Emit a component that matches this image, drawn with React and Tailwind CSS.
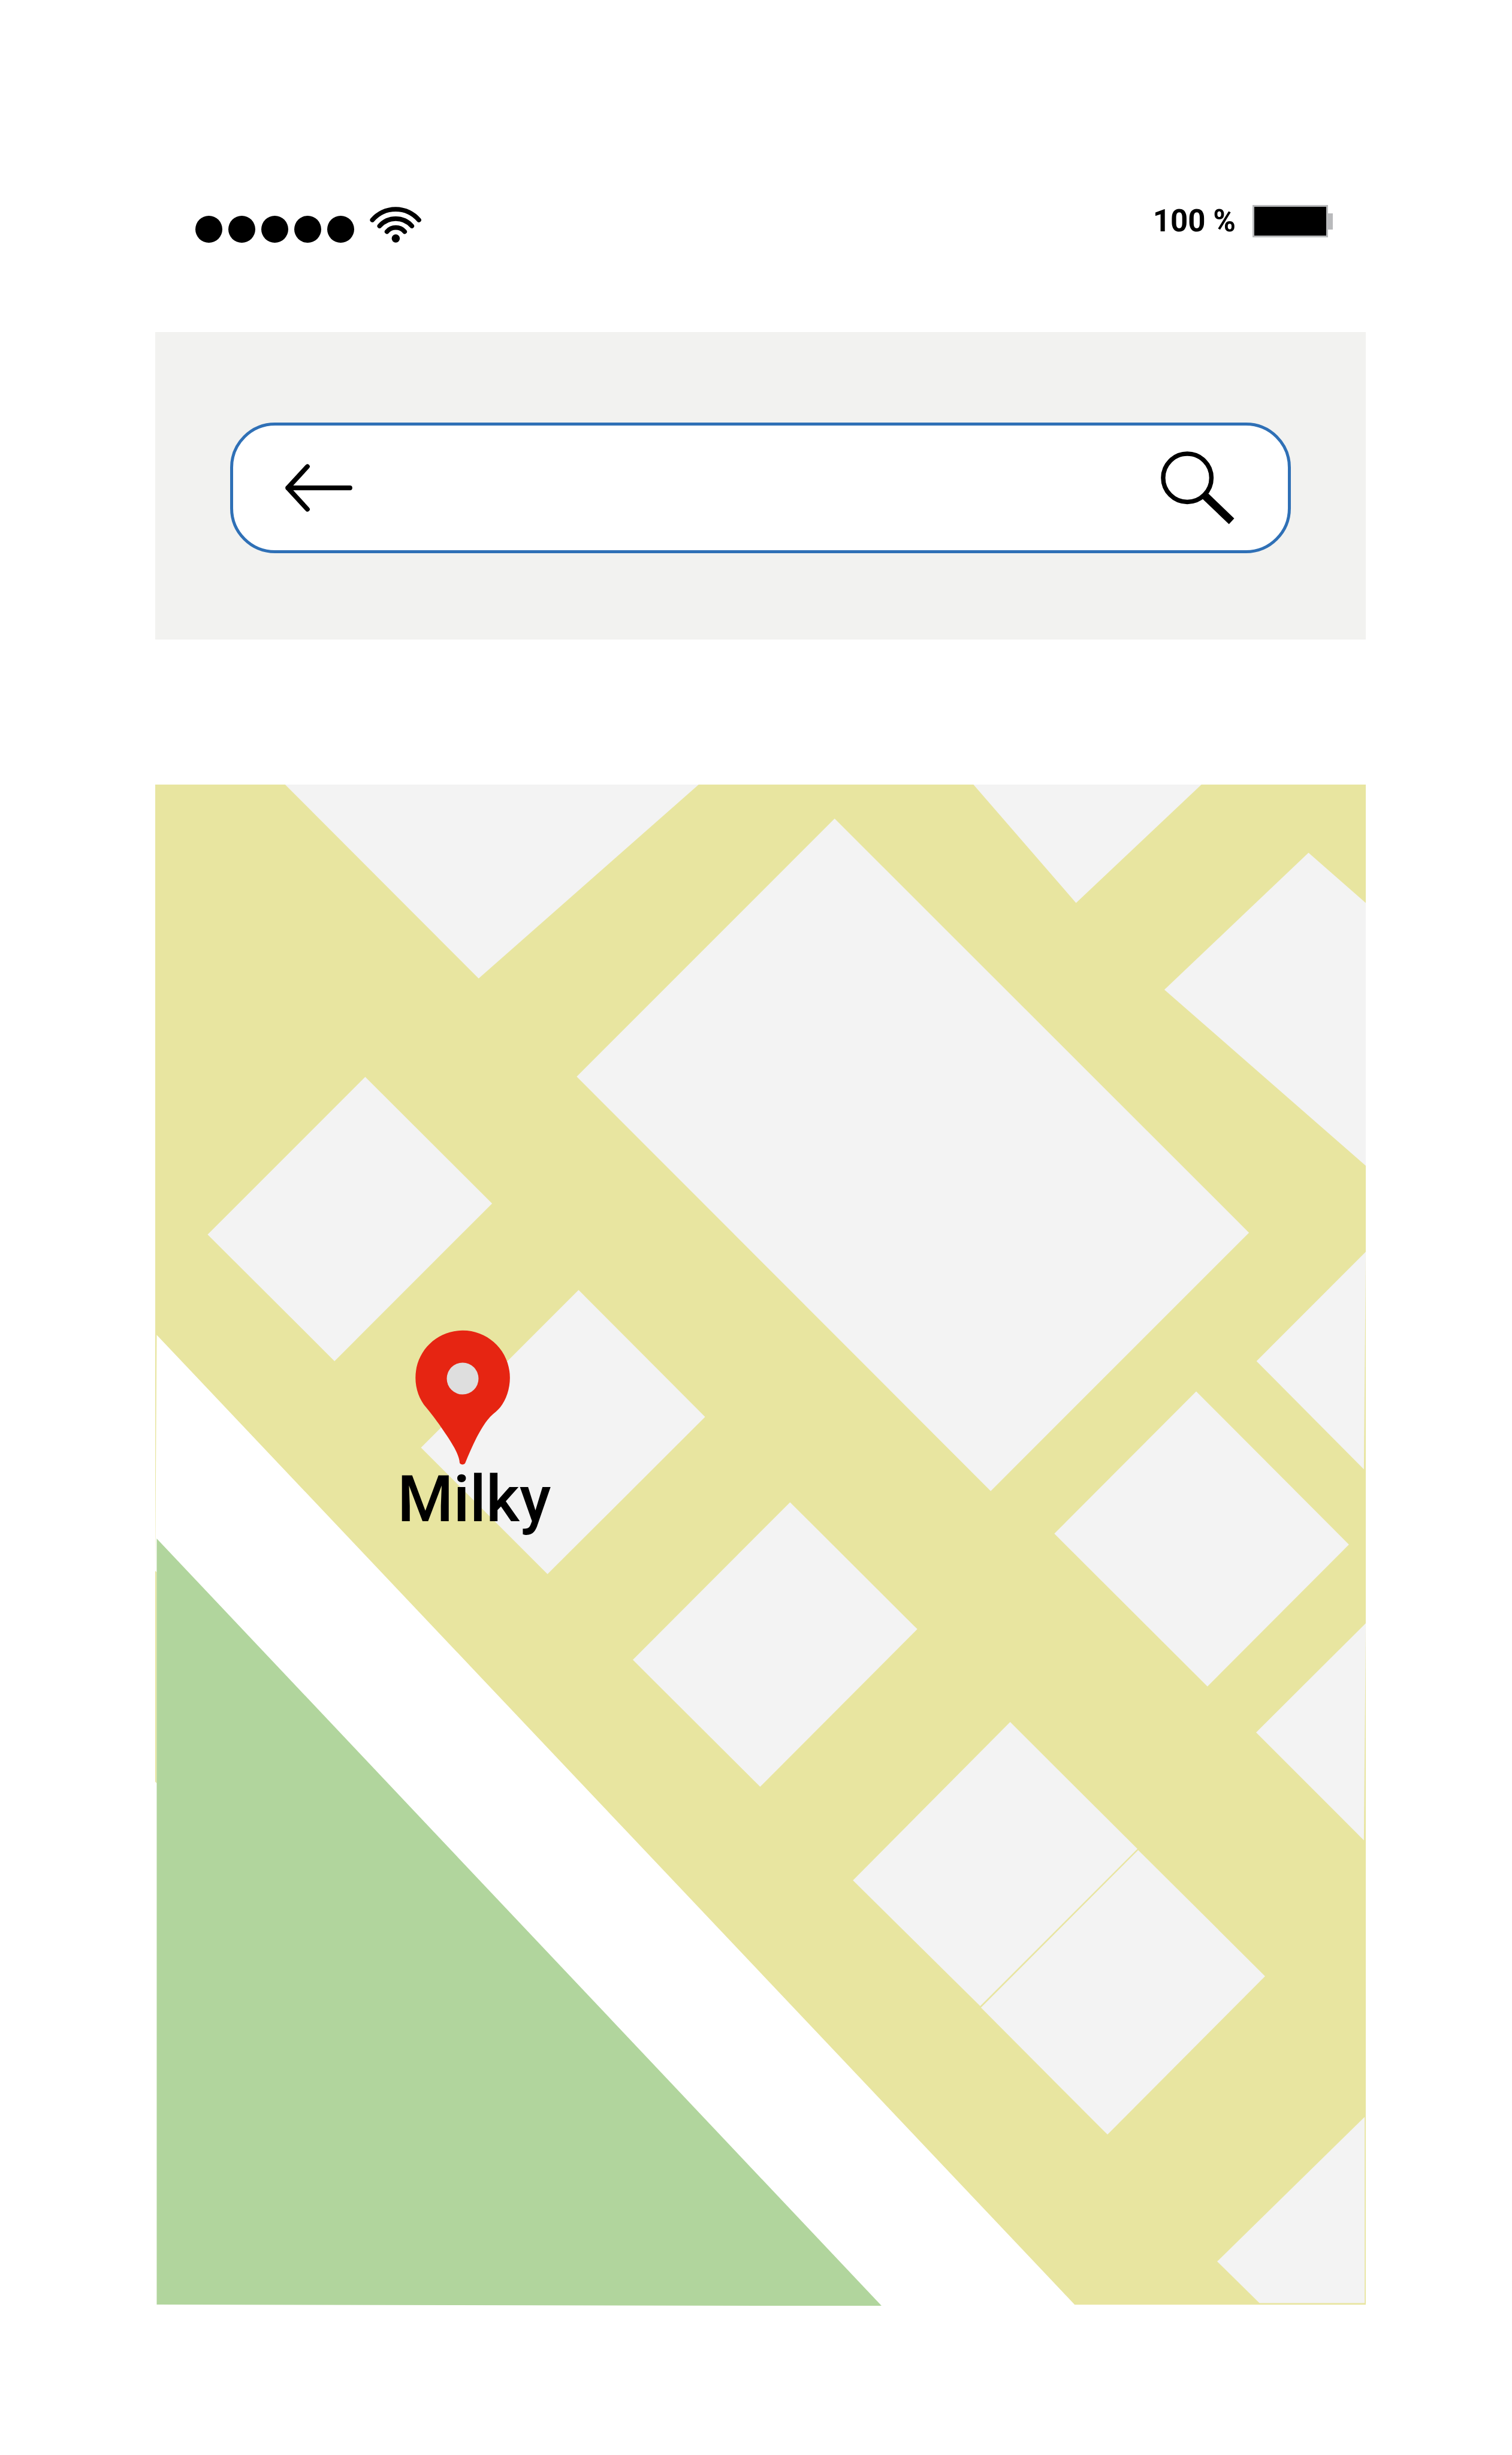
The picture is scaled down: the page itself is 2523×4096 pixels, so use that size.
const BUILDINGS = [
  "760,2096 1867,2096 1278,2615",
  "2599,2096 3210,2096 2874,2413",
  "2229,2188 3336,3294 2646,3984 1540,2877",
  "3495,2279 3649,2414 3649,3116 3110,2645",
  "3648,3345 3643,3926 3356,3637",
  "975,2878 1314,3216 893,3637 554,3299",
  "1545,3447 1883,3786 1462,4206 1124,3868",
  "2110,4014 2450,4353 2030,4774 1690,4435",
  "3195,3718 3603,4127 3225,4506 2816,4098",
  "3648,4337 3643,4917 3355,4629",
  "2698,4601 3038,4940 2618,5360 2278,5024",
  "3040,4943 3379,5280 2958,5703 2620,5364",
  "3645,5656 3645,6153 3364,6153 3251,6042",
];

function WifiIcon() {
  return (
    <svg viewBox="988 552 138 97" className="ml-[26px] h-[60px] w-[86px]" role="img" aria-label="Wi-Fi">
      <g fill="none" stroke="#000" strokeWidth="12.5" strokeLinecap="round">
        <path d="M994.5 587.6A82.4 82.4 0 0 1 1120 587.6" />
        <path d="M1014 603.7A58 58 0 0 1 1101 603.7" />
        <path d="M1033.8 619A31.7 31.7 0 0 1 1081.6 619" />
      </g>
      <circle cx="1057.6" cy="637.4" r="11" />
    </svg>
  );
}

function StatusBar() {
  return (
    <header className="flex items-start justify-between pt-[342px] pr-[55px] pl-[67px]">
      <div className="flex h-[63px] items-end">
        <div className="flex gap-[10px]" role="img" aria-label="Signal strength">
          {[0, 1, 2, 3, 4].map((dot) => (
            <span key={dot} className="size-[45px] rounded-full bg-black" />
          ))}
        </div>
        <WifiIcon />
      </div>
      <div className="flex h-[54px] items-center">
        <span className="mr-[28px] font-['Roboto',sans-serif] text-[51px] leading-[54px] font-bold">100 %</span>
        <span className="h-[54px] w-[126px] border-3 border-[#b9babc] bg-black" />
        <span className="h-[27px] w-[8px] bg-[#b9babc]" />
      </div>
    </header>
  );
}

function SearchPanel() {
  return (
    <section className="mt-[149px] bg-[#f2f2f0] pt-[151px] pr-[125px] pb-[144px] pl-[125px]">
      <form
        className="flex h-[218px] items-center rounded-[75px] border-5 border-[#2f70b6] bg-white pr-[89px] pl-[87px]"
        onSubmit={(e) => e.preventDefault()}
      >
        <button type="button" aria-label="Back" className="shrink-0">
          <svg viewBox="762 1239 179 128" className="h-[80px] w-[112px]">
            <path
              d="M934.6 1303H768.6M821 1246L768.6 1303L821 1360"
              fill="none"
              stroke="#000"
              strokeWidth="12.6"
              strokeLinecap="round"
              strokeLinejoin="round"
            />
          </svg>
        </button>
        <input type="text" aria-label="Search the map" className="h-full min-w-0 flex-1 bg-transparent px-8 text-[64px] outline-none" />
        <button type="submit" aria-label="Search" className="shrink-0">
          <svg viewBox="3101 1205 198 197" className="h-[122px] w-[123px]">
            <circle cx="3172" cy="1276.5" r="65" fill="none" stroke="#000" strokeWidth="12" />
            <path d="M3226 1316L3298.5 1386L3284.3 1401.3L3212 1332Z" />
          </svg>
        </button>
      </form>
    </section>
  );
}

function MapPin() {
  return (
    <svg viewBox="1109 3553 254 361" className="block h-[225px] w-[158px]" aria-hidden="true">
      <path
        fill="#e62512"
        d="M1236 3554C1166 3554 1109.5 3610 1109.5 3681C1109.5 3711 1120 3740 1138.5 3761C1152 3777 1163 3792 1178 3813C1192 3833 1206 3854 1214 3869C1222 3884 1227.5 3898 1228 3909C1231 3915 1240 3915 1243 3909C1252 3887 1262 3864 1273.6 3841C1284 3821 1296 3801 1306 3790C1316 3778 1326 3773 1336.8 3760C1353 3740 1362.8 3710 1362.8 3681C1362.8 3610 1306 3554 1236 3554Z"
      />
      <circle cx="1236" cy="3683" r="42.6" fill="#dedede" />
    </svg>
  );
}

function MapView() {
  return (
    <main className="relative mt-[242px]">
      <svg viewBox="414 2097 3234 4064" className="block w-full" role="img" aria-label="Street map">
        <rect x="414" y="2097" width="3234" height="4060.5" fill="#e8e5a0" />
        <g fill="#f3f3f3">
          {BUILDINGS.map((points) => (
            <polygon key={points} points={points} />
          ))}
        </g>
        <path fill="#fff" d="M418 3567L2870 6157V6162H413V4759L418 4765V4201L414 4197Z" />
        <polygon fill="#b1d59d" points="418,4111 2355,6161 418,6157" />
      </svg>
      <a href="#milky" className="absolute top-[35.85%] left-[20%] flex flex-col text-black">
        <span className="pl-[30px]">
          <MapPin />
        </span>
        <span className="font-['Roboto',sans-serif] text-[107px] leading-[116px] font-medium">Milky</span>
      </a>
    </main>
  );
}

export default function App() {
  return (
    <div className="min-h-screen bg-white pr-[244px] pl-[259px] text-black">
      <StatusBar />
      <SearchPanel />
      <MapView />
    </div>
  );
}
